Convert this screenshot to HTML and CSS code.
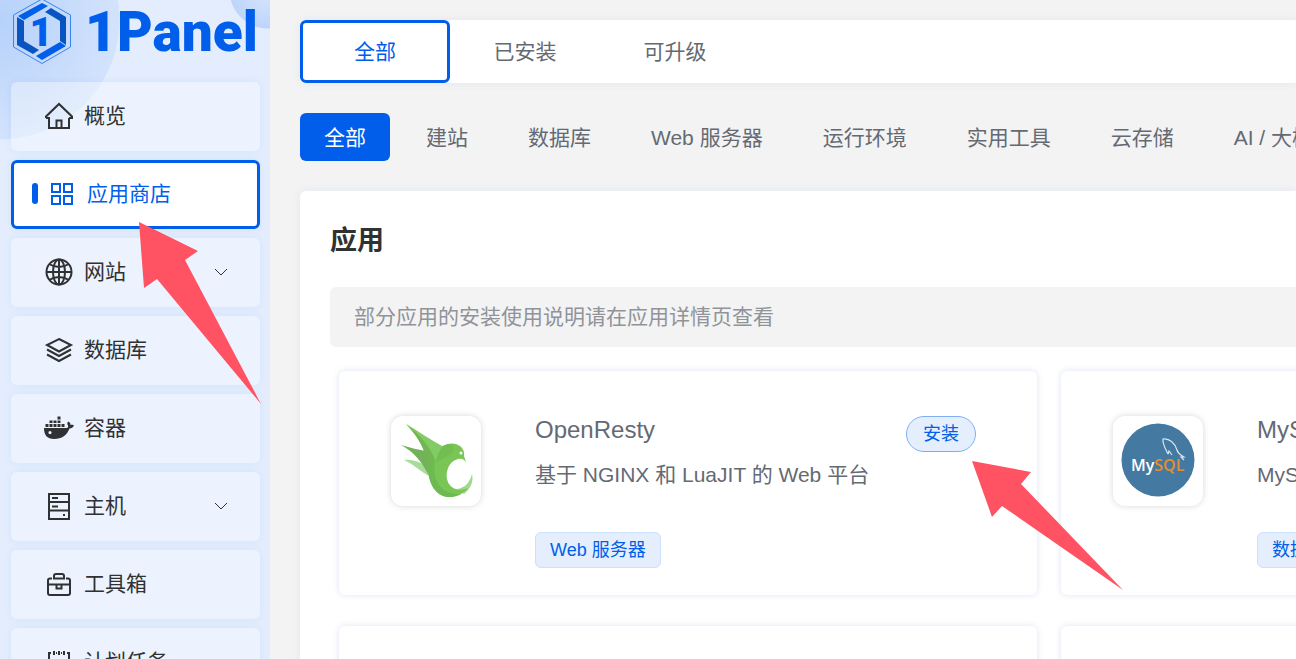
FILE: index.html
```html
<!DOCTYPE html>
<html lang="zh-CN">
<head>
    <meta charset="UTF-8">
    <meta name="viewport" content="width=device-width, initial-scale=1.0">
    <title>应用商店 - 1Panel</title>
    <link rel="stylesheet" href="styles.css">
</head>
<body>
    <aside class="sidebar">
        <a class="logo" href="#">
            <svg class="logo-mark" width="60" height="66" viewBox="11 -1 60 66">
                <path d="M42 -1 70.500 15V47L42 63.500 13.500 47V15Z" fill="none" stroke="#3b82f3"/>
                <path d="M18 16 42 3 48 6 24 20ZM60 42 66 46 42 60 36 56Z" fill="#005eeb"/>
                <path d="M17 17 24 21V41L39 50 33 54 17 45ZM51 8 66 17V45L60 41V21L45 12Z" fill="#0854c1"/>
                <text x="41" y="46" text-anchor="middle">1</text>
            </svg>
            <span class="logo-text">1Panel</span>
        </a>

        <nav class="menu">
            <a class="menu-item" href="#">
                <svg class="icon" viewBox="0 0 30 30"><path d="M2 17V15.500L15 3 28 15.500V17H25M2 17H5V27H25V17M12.500 27V19.500H17.500V27"/></svg>
                <span>概览</span>
            </a>
            <a class="menu-item active" href="#">
                <svg class="icon" viewBox="0 0 30 30"><path d="M4 5H12V13H4ZM16 5H24V13H16ZM4 17H12V25H4ZM16 17H24V25H16Z"/></svg>
                <span>应用商店</span>
            </a>
            <a class="menu-item" href="#">
                <svg class="icon" viewBox="0 0 30 30"><circle cx="15" cy="15" r="12.500"/><ellipse cx="15" cy="15" rx="6" ry="12.500"/><path d="M15 2V28M2 15H28M5 7Q15 13 25 7M5 23Q15 17 25 23"/></svg>
                <span>网站</span>
                <svg class="chevron" viewBox="0 0 14 8"><path d="M1 1 7 7 13 1"/></svg>
            </a>
            <a class="menu-item" href="#">
                <svg class="icon" viewBox="0 0 30 30"><path d="M15 4 27 10 15 16.500 3 10ZM3 14.500 15 21 27 14.500M3 19.500 15 26 27 19.500"/></svg>
                <span>数据库</span>
            </a>
            <a class="menu-item" href="#">
                <svg class="icon icon-fill" viewBox="0 0 30 30">
                    <path fill-rule="evenodd" d="M0 15H22.500C24 15 24.500 14 24 12.500 23 11 23 9.500 24.500 8.500 26 9.500 26.500 10.500 26.500 12 28 11.500 29.500 12 30 12.500 29 14.500 27.500 15.500 25.500 15.500 23 22 18 26 10 26 3 26 0 22 0 15ZM6 18A1.600 1.600 0 1 0 6 21.200 1.600 1.600 0 1 0 6 18Z"/>
                    <path d="M1.500 11H4.500V14H1.500ZM5.500 11H8.500V14H5.500ZM9.500 11H12.500V14H9.500ZM13.500 11H16.500V14H13.500ZM17.500 11H20.500V14H17.500ZM5.500 7.500H8.500V10H5.500ZM9.500 7.500H12.500V10H9.500ZM13.500 7.500H16.500V10H13.500ZM13.500 3.500H16.500V6.500H13.500Z"/>
                </svg>
                <span>容器</span>
            </a>
            <a class="menu-item" href="#">
                <svg class="icon" viewBox="0 0 30 30"><path d="M5 3H25V28H5ZM5 11H25M5 19.500H25M8 7H14M8 15.500H14M19 24H21"/></svg>
                <span>主机</span>
                <svg class="chevron" viewBox="0 0 14 8"><path d="M1 1 7 7 13 1"/></svg>
            </a>
            <a class="menu-item" href="#">
                <svg class="icon" viewBox="0 0 30 30"><path d="M8 9.500H6Q4 9.500 4 11.500V24Q4 26 6 26H24Q26 26 26 24V11.500Q26 9.500 24 9.500H22M10 9.500V7Q10 5 12 5H18Q20 5 20 7V9.500ZM4 15.500H26M12.500 15.500V19.500H17.500V15.500"/></svg>
                <span>工具箱</span>
            </a>
            <a class="menu-item" href="#">
                <svg class="icon" viewBox="0 0 30 30"><path d="M7 6H5V27H25V6H23M10 4V8M15 4V8M20 4V8M12 6H13M17 6H18M5 13H25"/></svg>
                <span>计划任务</span>
            </a>
            <svg class="pointer pointer-menu" width="122" height="182" viewBox="0 0 122 182"><path d="M0 0 59 29 46 38 122 182 18 57 5 66Z"/></svg>
        </nav>
    </aside>

    <main class="main">
        <div class="tabs">
            <button class="tab active">全部</button>
            <button class="tab">已安装</button>
            <button class="tab">可升级</button>
        </div>

        <div class="categories">
            <button class="category active">全部</button>
            <button class="category">建站</button>
            <button class="category">数据库</button>
            <button class="category">Web 服务器</button>
            <button class="category">运行环境</button>
            <button class="category">实用工具</button>
            <button class="category">云存储</button>
            <button class="category">AI / 大模型</button>
        </div>

        <section class="panel">
            <h1 class="title">应用</h1>
            <div class="alert">部分应用的安装使用说明请在应用详情页查看</div>

            <div class="apps">
                <article class="app-card">
                    <div class="app-icon">
                        <svg width="90" height="90" viewBox="0 0 90 90">
                            <path d="M13 44C23 43 32 47 38 53L38 60C30 56 24 49 13 44Z" fill="#a9dc98"/>
                            <path d="M10 29C20 32 28 34 35 35L42 50 37 58C30 45 24 37 10 29Z" fill="#72b25a"/>
                            <path d="M15 8C27 15 40 24 51 30L56 36 43 60 38 54C37 36 28 22 15 8Z" fill="#83cb64"/>
                            <path d="M15 8C33 22 42 35 46 50L44 66 37 56C36 40 32 26 15 8Z" fill="#72b653"/>
                            <path d="M66 73C74 72 79 66 81 58 83 66 79 73 73 78Z" fill="#a2d78f"/>
                            <path d="M51 30C57 27 62 27 65 28 71 30 74 35 73 40L75 46C73 43 70 42 67 43 56 46 53 60 58 68 62 74 69 75 77 72 71 79 65 81 59 81 45 81 37 67 37 52L44 45Z" fill="#79c657"/>
                            <path d="M44 43C43 53 43 59 46 65 50 74 57 78 68 78 64 81 59 81 56 81 43 79 37 65 37 50Z" fill="#6dba50"/>
                            <path d="M45 48C48 43 54 43 60 38 63 36 63 31 60 28 54 28 47 32 45 48Z" fill="#72be52"/>
                            <circle cx="70" cy="37" r="1.500" fill="#fff"/>
                        </svg>
                    </div>
                    <div class="app-info">
                        <div class="app-head">
                            <h2 class="app-name">OpenResty</h2>
                            <button class="install-btn">安装</button>
                        </div>
                        <p class="app-desc">基于 NGINX 和 LuaJIT 的 Web 平台</p>
                        <span class="tag">Web 服务器</span>
                    </div>
                    <svg class="pointer pointer-install" width="151" height="129" viewBox="0 0 151 129"><path d="M0 0 59 11 49 23 151 129 30 45 20 56Z"/></svg>
                </article>

                <article class="app-card">
                    <div class="app-icon">
                        <svg width="90" height="90" viewBox="0 0 90 90">
                            <circle cx="45" cy="44" r="36.500" fill="#4479a1"/>
                            <path d="M55 38C53 34 49 27 50 23 56 22 62 27 64 34 65 38 68 39 71 41L68 41 71 44M55 38 56 35 59 39" fill="none" stroke="#dce8f0" stroke-width="1.200"/>
                            <text class="mysql-text" x="18" y="55">My<tspan fill="#e48e2e">SQL</tspan></text>
                        </svg>
                    </div>
                    <div class="app-info">
                        <div class="app-head">
                            <h2 class="app-name">MySQL</h2>
                            <button class="install-btn">安装</button>
                        </div>
                        <p class="app-desc">MySQL 是开源关系型数据库</p>
                        <span class="tag">数据库</span>
                    </div>
                </article>

                <article class="app-card"></article>
                <article class="app-card"></article>
            </div>
        </section>
    </main>
</body>
</html>
```
FILE: styles.css
```css
:root {
    --primary: #005eeb;
    --primary-light: #e5eefd;
    --text: #303133;
    --text-regular: #646a73;
    --text-muted: #909399;
    --arrow: #ff5263;
}

* {
    box-sizing: border-box;
}

body {
    margin: 0;
    height: 100vh;
    display: flex;
    overflow: hidden;
    background-color: #f3f3f3;
    color: var(--text);
    font-family: "Liberation Sans", "Noto Sans CJK SC", sans-serif;
    font-size: 21px;
    line-height: 30px;
}

button {
    font: inherit;
    cursor: pointer;
}

.sidebar {
    flex: 0 0 270px;
    padding: 0 10px 0 11px;
    background:
        radial-gradient(circle at 268px -10px, #d8e6fc 0, #bdd5fb 38px, transparent 39px),
        radial-gradient(circle at 0 20px, #b6d1fa 0, #d3e3fc 119px, transparent 120px),
        #e3edfd;
}

.logo {
    display: flex;
    align-items: center;
    gap: 14px;
    height: 82px;
    padding-bottom: 18px;
    color: var(--primary);
    text-decoration: none;
}

.logo-mark {
    flex: none;
}

.logo-mark text {
    fill: var(--primary);
    font-family: Roboto, sans-serif;
    font-size: 40px;
    font-weight: 900;
}

.logo-text {
    font-family: Roboto, sans-serif;
    font-size: 55px;
    font-weight: 900;
}

.menu {
    position: relative;
    display: flex;
    flex-direction: column;
    gap: 9px;
}

.menu-item {
    display: flex;
    align-items: center;
    gap: 10px;
    height: 69px;
    padding: 0 32px 2px 33px;
    border-radius: 6px;
    background-color: rgba(255, 255, 255, 0.35);
    box-shadow: 0 0 8px rgba(0, 94, 235, 0.07);
    color: var(--text);
    text-decoration: none;
}

.menu-item.active {
    padding-left: 18px;
    border: 3px solid var(--primary);
    background-color: #fff;
    color: var(--primary);
}

.menu-item.active::before {
    content: "";
    width: 6px;
    height: 21px;
    border-radius: 3px;
    background-color: var(--primary);
}

.menu-item.active .icon {
    margin-right: -1px;
}

.icon {
    flex: none;
    width: 30px;
    height: 30px;
    fill: none;
    stroke: currentColor;
    stroke-width: 2;
}

.icon-fill {
    fill: currentColor;
    stroke: none;
}

.chevron {
    width: 14px;
    height: 8px;
    margin-left: auto;
    fill: none;
    stroke: currentColor;
}

/* red pointers lie over the page */
.pointer {
    position: absolute;
    z-index: 2;
    fill: var(--arrow);
    pointer-events: none;
}

.pointer-menu {
    top: 140px;
    left: 128px;
}

.pointer-install {
    top: 90px;
    right: -86px;
}

.main {
    flex: 1;
    min-width: 0;
    display: flex;
    flex-direction: column;
    gap: 30px;
    padding: 20px 0 0 30px;
}

.tabs {
    flex: none;
    display: flex;
    border-radius: 4px 0 0 4px;
    background-color: #fff;
    box-shadow: 0 0 8px rgba(0, 94, 235, 0.08);
}

.tab {
    width: 150px;
    height: 63px;
    border: 3px solid transparent;
    border-radius: 6px;
    background: none;
    color: var(--text-regular);
}

.tab.active {
    border-color: var(--primary);
    color: var(--primary);
}

.categories {
    flex: none;
    display: flex;
    gap: 12px;
}

.category {
    flex: none;
    height: 48px;
    padding: 2px 24px 0;
    border: 0;
    border-radius: 6px;
    background: none;
    color: var(--text-regular);
}

.category.active {
    background-color: var(--primary);
    color: #fff;
}

.panel {
    flex: 1 0 auto;
    padding: 30px 0 30px 30px;
    border-radius: 6px 0 0 0;
    background-color: #fff;
    box-shadow: 0 0 8px rgba(0, 94, 235, 0.08);
}

.title {
    margin: 0 0 26px;
    font-size: 27px;
    font-weight: 700;
    line-height: 40px;
}

.alert {
    padding: 15px 24px;
    border-radius: 6px 0 0 6px;
    background-color: #f3f3f3;
    color: var(--text-muted);
}

.apps {
    display: grid;
    grid-template-columns: repeat(2, minmax(698px, 1fr));
    gap: 31px 24px;
    padding: 24px 9px;
}

.app-card {
    position: relative;
    display: flex;
    gap: 54px;
    min-height: 224px;
    padding: 45px 61px 27px 52px;
    border-radius: 6px;
    background-color: #fff;
    box-shadow: 0 0 6px rgba(0, 60, 180, 0.14);
}

.app-icon {
    flex: none;
    width: 90px;
    height: 90px;
    border-radius: 12px;
    box-shadow: 0 0 6px rgba(0, 0, 0, 0.16);
}

.mysql-text {
    fill: #fff;
    font-family: "Open Sans", sans-serif;
    font-size: 16px;
    font-weight: 600;
}

.app-info {
    flex: 1;
    color: var(--text-regular);
}

.app-head {
    display: flex;
    justify-content: space-between;
    margin-bottom: 8px;
}

.app-name {
    margin: 0;
    font-size: 24px;
    font-weight: 400;
    line-height: 28px;
}

.install-btn {
    height: 36px;
    padding: 0 16px;
    border: 1px solid #80aff5;
    border-radius: 18px;
    background-color: var(--primary-light);
    color: var(--primary);
    font-size: 18px;
}

.app-desc {
    margin: 0 0 42px;
}

.tag {
    display: inline-block;
    padding: 0 14px;
    border: 1px solid #ccdffb;
    border-radius: 6px;
    background-color: var(--primary-light);
    color: var(--primary);
    font-size: 18px;
    line-height: 34px;
}
```
